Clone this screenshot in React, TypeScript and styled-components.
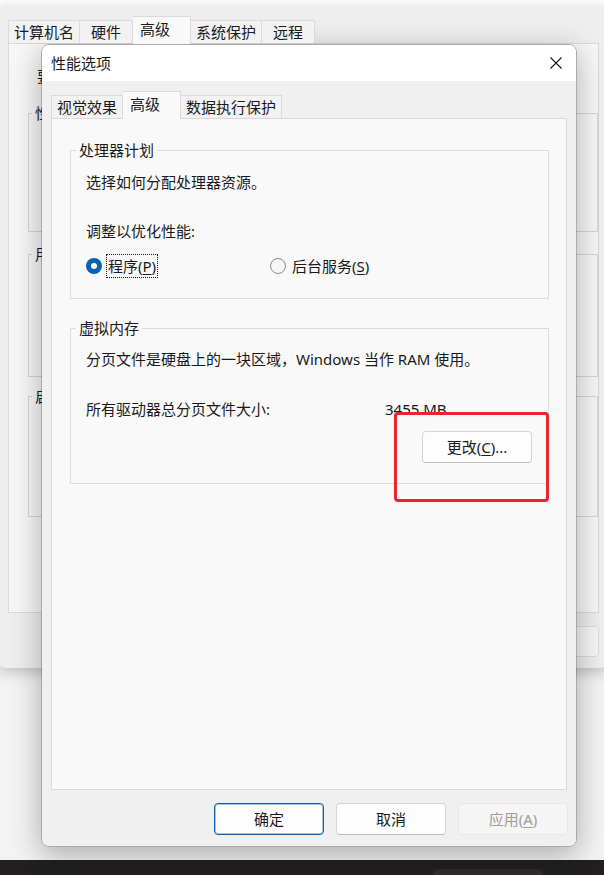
import React from 'react';
import styled, { createGlobalStyle } from 'styled-components';

const GlobalStyle = createGlobalStyle`
  html, body {
    margin: 0;
    padding: 0;
  }
  body {
    background: #f7f7f7;
    font-family: "Noto Sans", "Noto Sans CJK SC", sans-serif;
    font-size: 15px;
    color: #1a1a1a;
  }
`;

const Page = styled.div`
  width: 604px;
  height: 875px;
  overflow: hidden;
  display: flex;
  flex-direction: column;
  position: relative;
  background: linear-gradient(#fbfbfb 0, #fbfbfb 7px, #f3f3f3 7px);
`;

const Desktop = styled.div`
  position: relative;
  flex: 1;
`;

const Taskbar = styled.div`
  height: 15px;
  background: #211f1f;
  display: flex;
  align-items: flex-end;
  padding-left: 433px;
`;

const TaskItem = styled.div`
  width: 110px;
  height: 6px;
  border-radius: 6px 6px 0 0;
  background: #2e2c2c;
`;

/* ---------- system properties window behind ---------- */

const BackWindow = styled.div`
  position: absolute;
  left: -2px;
  top: 7px;
  width: 610px;
  height: 661px;
  box-sizing: border-box;
  padding: 9px 9px 0 10px;
  background: #eeeeee;
  border-radius: 0 0 8px 8px;
  box-shadow: 0 4px 14px rgba(0, 0, 0, 0.22);
  display: flex;
  flex-direction: column;
`;

const TabRow = styled.div`
  display: flex;
  align-items: flex-end;
  height: 27px;
  position: relative;
  z-index: 1;
  flex-shrink: 0;
`;

const Tab = styled.div<{ $active?: boolean }>`
  box-sizing: border-box;
  min-width: 53px;
  text-align: center;
  line-height: 20px;
  white-space: nowrap;
  border: 1px solid #dadada;
  border-bottom: none;
  ${p => p.$active
    ? `
      height: 28px;
      margin-bottom: -1px;
      padding: 2px 20px 0 7px;
      background: #f9f9f9;
    `
    : `
      height: 23px;
      padding: 1px 5px 0;
      background: #f2f2f2;
      & + & { border-left: none; }
    `}
`;

const BackPanel = styled.div`
  height: 570px;
  box-sizing: border-box;
  border: 1px solid #d9d9d9;
  background: #f7f7f7;
  padding: 0 0 0 19px;
  display: flex;
  flex-direction: column;
`;

// only the first glyph of each caption shows beside the dialog
const BackNote = styled.div`
  margin: 22px 0 0 9px;
  line-height: 20px;
`;

const BackGroup = styled.fieldset<{ $h: number; $gap: number }>`
  margin: ${p => p.$gap}px 0 0 0;
  padding: 0;
  height: ${p => p.$h}px;
  box-sizing: border-box;
  border: 1px solid #d6d6d6;
  min-width: 0;

  legend {
    margin-left: 3px;
    padding: 0 0 0 3px;
    line-height: 20px;
  }
`;

const BackFooter = styled.div`
  display: flex;
  justify-content: flex-end;
  gap: 8px;
  margin-top: 13px;
`;

const BackButton = styled.div`
  width: 80px;
  height: 31px;
  box-sizing: border-box;
  border: 1px solid #dcdcdc;
  border-radius: 4px;
  background: #f6f6f6;
`;

/* ---------- performance options dialog ---------- */

const Dialog = styled.div`
  position: absolute;
  left: 41px;
  top: 44px;
  width: 536px;
  height: 803px;
  box-sizing: border-box;
  border: 1px solid rgba(0, 0, 0, 0.3);
  border-radius: 8px;
  overflow: hidden;
  box-shadow: 0 8px 30px rgba(0, 0, 0, 0.3);
  display: flex;
  flex-direction: column;
`;

const TitleBar = styled.div`
  height: 36px;
  flex-shrink: 0;
  background: #ffffff;
  display: flex;
  align-items: center;
  justify-content: space-between;
  padding-left: 9px;
`;

const Title = styled.span`
  line-height: 20px;
`;

const CloseButton = styled.div`
  width: 40px;
  height: 36px;
  display: flex;
  align-items: center;
  justify-content: center;
`;

const DialogBody = styled.div`
  flex: 1;
  background: #f0f0f0;
  padding: 10px 9px 11px;
  display: flex;
  flex-direction: column;
  min-height: 0;
`;

const Panel = styled.div`
  flex: 1;
  border: 1px solid #dadada;
  background: #f9f9f9;
  padding: 21px 17px 0 18px;
  display: flex;
  flex-direction: column;
`;

const Group = styled.fieldset<{ $gap?: number }>`
  margin: ${p => p.$gap ?? 0}px 0 0 0;
  padding: 0;
  border: 1px solid #dcdcdc;
  min-width: 0;

  legend {
    margin-left: 5px;
    padding: 0 3px;
    line-height: 20px;
  }
`;

const GroupBody = styled.div`
  display: flex;
  flex-direction: column;
  padding: 0 16px 20px 15px;
`;

const Line = styled.div<{ $gap: number }>`
  margin-top: ${p => p.$gap}px;
  line-height: 20px;
  white-space: nowrap;
`;

const SizeRow = styled.div`
  margin-top: 30px;
  line-height: 20px;
  display: grid;
  grid-template-columns: 299px auto;
`;

const RadioRow = styled.div`
  margin-top: 13px;
  height: 24px;
  display: grid;
  grid-template-columns: 184px auto;
  align-items: center;
`;

const RadioOption = styled.label`
  display: flex;
  align-items: center;
  gap: 4px;
`;

const Radio = styled.span<{ $checked?: boolean }>`
  width: 16px;
  height: 16px;
  box-sizing: border-box;
  border-radius: 50%;
  flex-shrink: 0;
  display: flex;
  align-items: center;
  justify-content: center;
  ${p => p.$checked
    ? `
      background: #0a62b5;
      &::after {
        content: '';
        width: 6px;
        height: 6px;
        border-radius: 50%;
        background: #ffffff;
      }
    `
    : `
      border: 1px solid #8a8a8a;
      background: #f6f6f6;
    `}
`;

const RadioText = styled.span<{ $focused?: boolean }>`
  line-height: 20px;
  padding: 1px 1px;
  border: 1px dotted ${p => (p.$focused ? '#1a1a1a' : 'transparent')};
`;

const Key = styled.u`
  text-underline-offset: 2px;
  text-decoration-thickness: 1px;
`;

const Button = styled.button<{ $primary?: boolean }>`
  width: 110px;
  height: 32px;
  box-sizing: border-box;
  font: inherit;
  line-height: 20px;
  color: #1a1a1a;
  background: #fdfdfd;
  border: 1px solid #d4d4d4;
  border-bottom-color: #bdbdbd;
  border-radius: 4px;
  padding: 0;

  ${p => p.$primary && `
    border: 1px solid #175c9c;
    box-shadow: inset 0 0 0 1px rgba(23, 92, 156, 0.35);
  `}

  &:disabled {
    background: #f5f5f5;
    border-color: #e8e8e8;
    color: #9d9d9d;
  }
`;

const ChangeButton = styled(Button)`
  align-self: flex-end;
  margin-top: 12px;
`;

const Footer = styled.div`
  display: flex;
  justify-content: flex-end;
  gap: 12px;
  margin: 13px -1px 0 0;
`;

const RedMark = styled.div`
  position: absolute;
  left: 394px;
  top: 412px;
  width: 155px;
  height: 90px;
  box-sizing: border-box;
  border: 3px solid #e8262b;
  border-radius: 4px;
  pointer-events: none;
`;

const CloseIcon = () => (
  <svg width="12" height="12" viewBox="0 0 12 12">
    <path d="M0.5 0.5 L11.5 11.5 M11.5 0.5 L0.5 11.5" stroke="#1a1a1a" strokeWidth="1.1" fill="none" />
  </svg>
);

export default function App() {
  return (
    <>
      <GlobalStyle />
      <Page>
        <Desktop>
          <BackWindow>
            <TabRow>
              <Tab>计算机名</Tab>
              <Tab>硬件</Tab>
              <Tab $active>高级</Tab>
              <Tab>系统保护</Tab>
              <Tab>远程</Tab>
            </TabRow>
            <BackPanel>
              <BackNote>要</BackNote>
              <BackGroup $gap={17} $h={129}>
                <legend>性</legend>
              </BackGroup>
              <BackGroup $gap={12} $h={133}>
                <legend>用</legend>
              </BackGroup>
              <BackGroup $gap={9} $h={131}>
                <legend>启</legend>
              </BackGroup>
            </BackPanel>
            <BackFooter>
              <BackButton />
              <BackButton />
              <BackButton />
            </BackFooter>
          </BackWindow>

          <Dialog>
            <TitleBar>
              <Title>性能选项</Title>
              <CloseButton>
                <CloseIcon />
              </CloseButton>
            </TitleBar>
            <DialogBody>
              <TabRow>
                <Tab>视觉效果</Tab>
                <Tab $active>高级</Tab>
                <Tab>数据执行保护</Tab>
              </TabRow>
              <Panel>
                <Group>
                  <legend>处理器计划</legend>
                  <GroupBody>
                    <Line $gap={12}>选择如何分配处理器资源。</Line>
                    <Line $gap={29}>调整以优化性能:</Line>
                    <RadioRow>
                      <RadioOption>
                        <Radio $checked />
                        <RadioText $focused>程序(<Key>P</Key>)</RadioText>
                      </RadioOption>
                      <RadioOption>
                        <Radio />
                        <RadioText>后台服务(<Key>S</Key>)</RadioText>
                      </RadioOption>
                    </RadioRow>
                  </GroupBody>
                </Group>

                <Group $gap={19}>
                  <legend>虚拟内存</legend>
                  <GroupBody>
                    <Line $gap={11}>分页文件是硬盘上的一块区域，Windows 当作 RAM 使用。</Line>
                    <SizeRow>
                      <span>所有驱动器总分页文件大小:</span>
                      <span>3455 MB</span>
                    </SizeRow>
                    <ChangeButton>更改(<Key>C</Key>)...</ChangeButton>
                  </GroupBody>
                </Group>
              </Panel>
              <Footer>
                <Button $primary>确定</Button>
                <Button>取消</Button>
                <Button disabled>应用(<Key>A</Key>)</Button>
              </Footer>
            </DialogBody>
          </Dialog>
        </Desktop>
        <Taskbar>
          <TaskItem />
        </Taskbar>
        <RedMark />
      </Page>
    </>
  );
}
